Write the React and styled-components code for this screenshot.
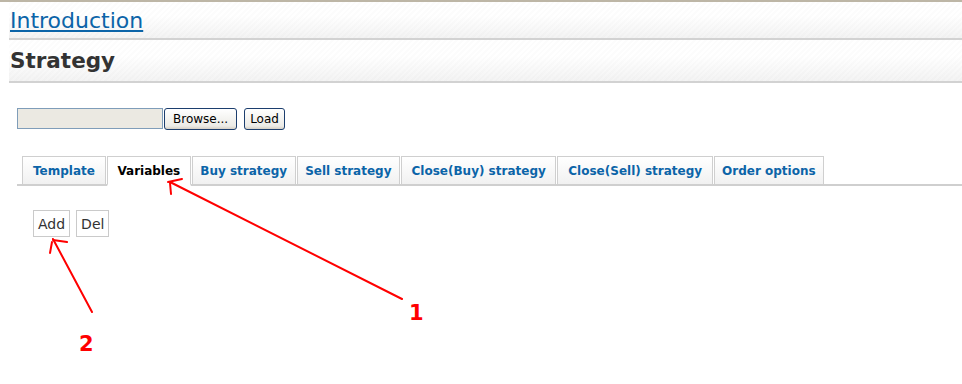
import React from 'react'
import styled, { createGlobalStyle } from 'styled-components';

const GlobalStyle = createGlobalStyle`
    body {
        margin: 0;
        background: #fff;
        font-family: "DejaVu Sans", Verdana, sans-serif;
    }
`

const Page = styled.div`
    position: relative;
    width: 962px;
    height: 384px;
    border-top: 2px solid #bdb6a6;
    overflow: hidden;
`

const Band = styled.div`
    margin-left: 9px;
    height: ${p => p.h}px;
    display: flex;
    align-items: center;
    border-bottom: 2px solid #d2d2d2;
    background: repeating-linear-gradient(135deg, rgba(0,0,0,0.012) 0 2px, transparent 2px 4px),
                linear-gradient(to bottom, #fff 40%, #f3f3f3);
`

const IntroLink = styled.a`
    font-size: 22px;
    color: #0b64a8;
    text-decoration: underline;
    margin-left: 1px;
    margin-top: 1px;
`

const Title = styled.h2`
    margin: 0 0 0 1px;
    font-size: 21.5px;
    font-weight: bold;
    color: #333;
`

const Content = styled.div`
    padding-left: 17px;
`

const FileRow = styled.div`
    display: flex;
    align-items: center;
    margin-top: 24px;
    height: 23px;
`

const FileField = styled.div`
    width: 144px;
    height: 19px;
    background: #ebe9e2;
    border: 1px solid #7f9db9;
`

const XpButton = styled.button`
    height: 22px;
    margin-left: ${p => p.gap || 0}px;
    padding: 0 ${p => p.pad || 9}px;
    border: 1px solid #1c3e6e;
    border-radius: 3px;
    background: linear-gradient(to bottom, #fff, #ecebe6 85%, #d6d0c5);
    font-family: "DejaVu Sans", Tahoma, sans-serif;
    font-size: 12px;
    color: #000;
`

const TabBar = styled.div`
    display: flex;
    align-items: flex-end;
    margin-top: 25px;
    padding-left: 5px;
    border-bottom: 2px solid #cfcfcf;
    height: 29px;
`

const Tab = styled.div`
    height: 27px;
    margin-right: 1px;
    margin-bottom: ${p => p.active ? '-2px' : '0'};
    padding: 0 ${p => p.pad || 12}px;
    display: flex;
    align-items: center;
    border: 1px solid #cfcfcf;
    border-bottom: ${p => p.active ? '2px solid #fff' : 'none'};
    background: ${p => p.active ? '#fff' : 'linear-gradient(to bottom, #fff, #f1f1f1)'};
    font-size: 12px;
    font-weight: bold;
    color: ${p => p.active ? '#000' : '#0b64a8'};
    white-space: nowrap;
`

const ActionRow = styled.div`
    display: flex;
    gap: 6px;
    margin-top: 24px;
    margin-left: 16px;
`

const SmallButton = styled.button`
    height: 27px;
    padding: 0 4px;
    border: 1px solid #cacaca;
    background: #fff;
    font-family: "DejaVu Sans", Verdana, sans-serif;
    font-size: 14px;
    color: #333;
`

const Overlay = styled.svg`
    position: absolute;
    left: 0;
    top: 0;
    pointer-events: none;
`

const Note = styled.text`
    font-family: "DejaVu Sans", sans-serif;
    font-weight: bold;
    font-size: 21px;
    fill: #f00;
`

const tabs = [
    { label: 'Template', pad: 10 },
    { label: 'Variables', active: true, pad: 9.5 },
    { label: 'Buy strategy', pad: 7.5 },
    { label: 'Sell strategy', pad: 7.5 },
    { label: 'Close(Buy) strategy', pad: 9.5 },
    { label: 'Close(Sell) strategy', pad: 10 },
    { label: 'Order options', pad: 7 },
]

const App = () => {
    return (
        <Page>
            <GlobalStyle/>
            <Band h={36}>
                <IntroLink href="#">Introduction</IntroLink>
            </Band>
            <Band h={41}>
                <Title>Strategy</Title>
            </Band>
            <Content>
                <FileRow>
                    <FileField/>
                    <XpButton gap={1} pad={8}>Browse...</XpButton>
                    <XpButton gap={7} pad={5}>Load</XpButton>
                </FileRow>
                <TabBar>
                    {tabs.map(t => (
                        <Tab key={t.label} active={t.active} pad={t.pad}>{t.label}</Tab>
                    ))}
                </TabBar>
                <ActionRow>
                    <SmallButton>Add</SmallButton>
                    <SmallButton>Del</SmallButton>
                </ActionRow>
            </Content>
            {/* hand drawn annotations */}
            <Overlay width="962" height="384">
                <g stroke="#f00" strokeWidth="2" fill="none" strokeLinecap="round">
                    <path d="M402 297 L170 180"/>
                    <path d="M168 180 L182 177"/>
                    <path d="M170 181 L171 192"/>
                    <path d="M92 310 L53 237"/>
                    <path d="M53 238 L67 240"/>
                    <path d="M52 240 L50 251"/>
                </g>
                <Note x="409" y="318">1</Note>
                <Note x="79" y="349">2</Note>
            </Overlay>
        </Page>
    )
}

export default App;
